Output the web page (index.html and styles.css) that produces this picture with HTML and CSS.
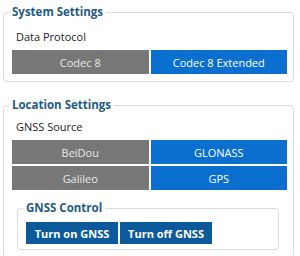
FILE: index.html
```html
<!DOCTYPE html>
<html lang="en">
<head>
    <meta charset="UTF-8">
    <title>Settings</title>
    <link rel="stylesheet" href="styles.css">
</head>
<body>

<fieldset class="group first">
    <legend>System Settings</legend>
    <div class="field-label">Data Protocol</div>
    <div class="choices">
        <button class="choice">Codec 8</button>
        <button class="choice active">Codec 8 Extended</button>
    </div>
</fieldset>

<fieldset class="group second">
    <legend>Location Settings</legend>
    <div class="field-label">GNSS Source</div>
    <div class="choices">
        <button class="choice">BeiDou</button>
        <button class="choice active">GLONASS</button>
        <button class="choice">Galileo</button>
        <button class="choice active">GPS</button>
    </div>

    <fieldset class="group inner">
        <legend>GNSS Control</legend>
        <div class="actions">
            <button class="action">Turn on GNSS</button>
            <button class="action">Turn off GNSS</button>
        </div>
    </fieldset>
</fieldset>

</body>
</html>
```

FILE: styles.css
```css
body {
    font-family: "Open Sans", "Noto Sans", sans-serif;
    font-size: 11px;
    color: #222;
    background-color: #fff;
    margin: 0;
    padding: 4px 6px 0 3px;
}

.group {
    border: 1px solid #dcdcdc;
    border-radius: 4px;
    margin: 0;
    padding: 0 6px 7px 8px;
}

.group legend {
    font-weight: bold;
    font-size: 11.5px;
    line-height: 16px;
    color: #245b84;
    padding: 0 3px;
    margin-left: -3px;
}

.second {
    margin-top: 15px;
}

.field-label {
    padding-left: 4px;
    margin-top: 6px;
    line-height: 16px;
}

.first .field-label {
    margin-top: 9px;
}

.choices {
    display: grid;
    grid-template-columns: 1fr 1fr;
    gap: 2px;
    margin-top: 5px;
}

.choice {
    font-family: inherit;
    font-size: 11px;
    height: 24px;
    border: none;
    background-color: #777;
    color: #e8e8e8;
    padding: 0;
}

.choice.active {
    background-color: #0a6fcf;
    color: #fff;
}

.inner {
    margin: 10px 8px 0 5px;
    padding-bottom: 5px;
}

.actions {
    display: flex;
    gap: 2px;
    margin-top: 6px;
}

.action {
    font-family: inherit;
    font-size: 11px;
    font-weight: bold;
    width: 92px;
    height: 22px;
    border: none;
    background-color: #0c5a9c;
    color: #fff;
    padding: 0;
}
```
